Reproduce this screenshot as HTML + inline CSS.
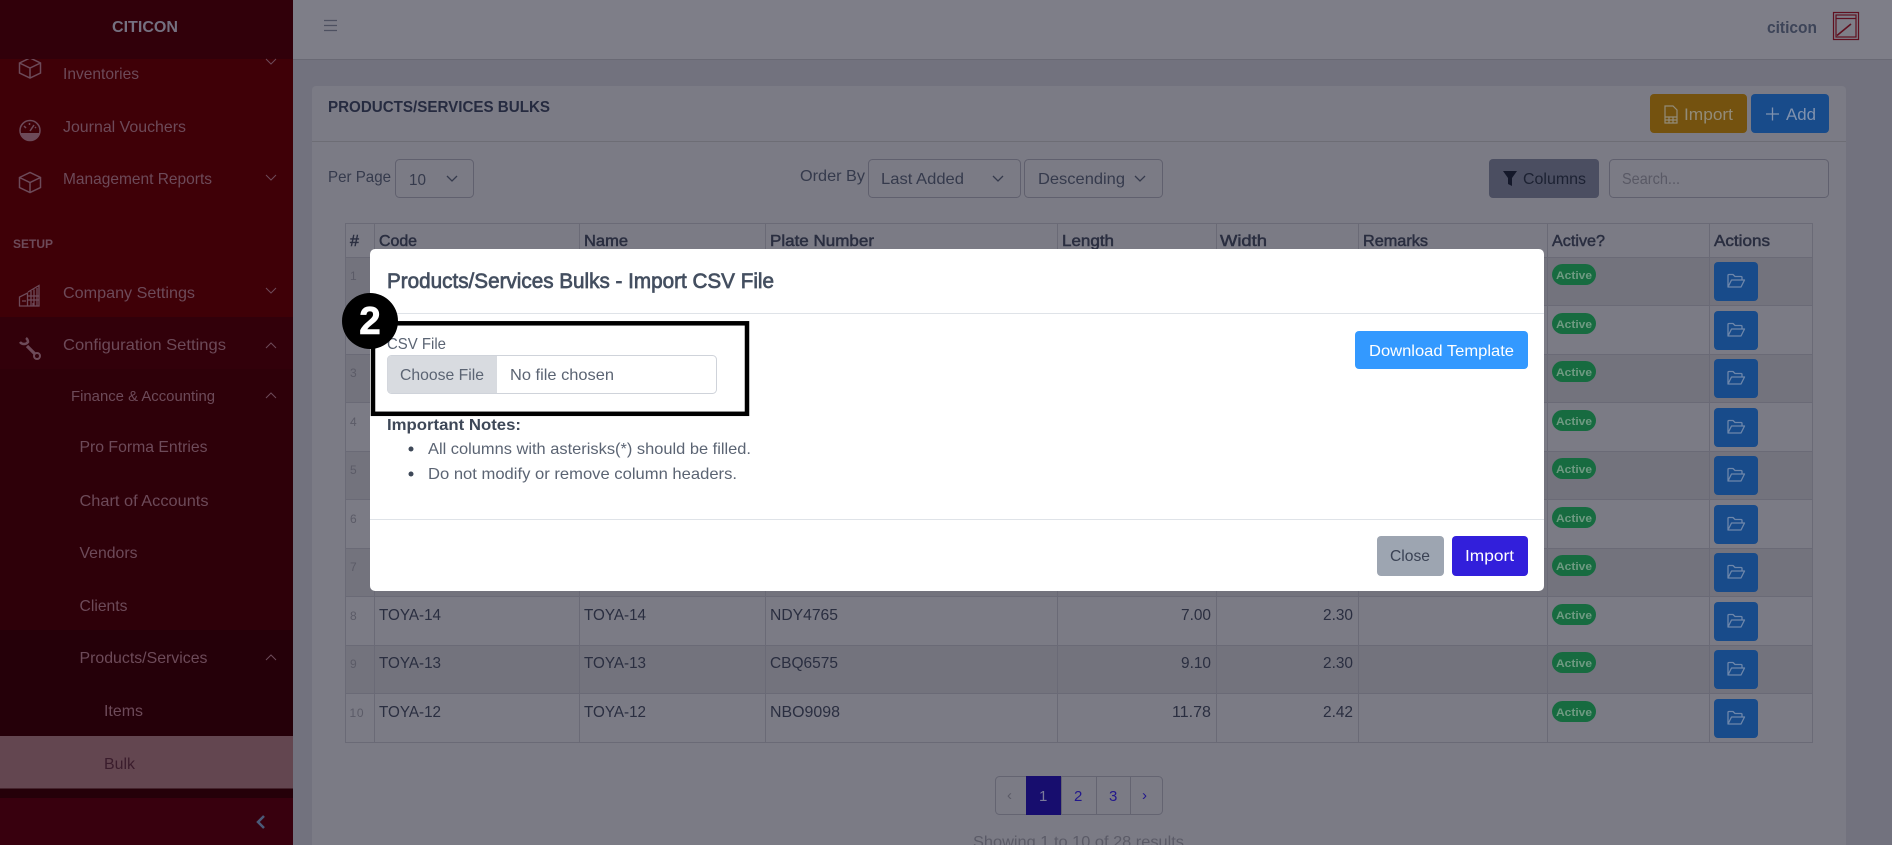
<!DOCTYPE html>
<html lang="en"><head><meta charset="utf-8"><title>Products/Services Bulks</title>
<style>
html,body{margin:0;padding:0;width:1892px;height:845px;overflow:hidden;background:#72727e}
svg{display:block;font-family:"Liberation Sans",sans-serif}
.s{font-size:16px;fill:#6d4a59}
.th{font-size:16px;fill:#2a2e40;stroke:#2a2e40;stroke-width:.5}
.td{font-size:16px;fill:#2a2e40}
.n{font-size:12px;fill:#5b5b67}
.ic{fill:none;stroke:#6d4a59;stroke-width:1.5}
.ch{fill:none;stroke:#6d4a59;stroke-width:1}
.bd{font-size:11px;font-weight:700;fill:#6f9a82}
.ln{stroke:#6a6a76;stroke-width:1}
.m{font-size:16px;fill:#5b6473}
</style></head><body>
<svg width="1892" height="845" viewBox="0 0 1892 845" xmlns="http://www.w3.org/2000/svg">
<defs>
<g id="box"><path class="ic" d="M0 5L10.500 0L21 5V15L10.500 20L0 15ZM0 5L10.500 10L21 5M10.500 10V20"/></g>
<g id="act"><rect width="44" height="39" rx="4" fill="#184b8a"/><path d="M14 25V13.500a1 1 0 0 1 1-1h4l2 2h6a1 1 0 0 1 1 1V18M14 25h13l3.500-7H17.500z" fill="none" stroke="#6d86aa" stroke-width="1.300" stroke-linejoin="round"/></g>
<rect id="bg" width="44" height="21" rx="10.500" fill="#176b40"/>
</defs>

<!-- page -->
<rect width="1892" height="845" fill="#72727e"/>
<rect x="293" y="0" width="1599" height="59" fill="#7e7e88"/>
<line x1="293" y1="59.500" x2="1892" y2="59.500" stroke="#696974"/>
<path d="M324 20.500h13M324 25.500h13M324 30.500h13" stroke="#4d5060" stroke-width="1.200" fill="none"/>
<text x="1767" y="33" font-size="17" font-weight="700" fill="#3d4458" textLength="50" lengthAdjust="spacingAndGlyphs">citicon</text>
<g fill="none" stroke="#601020" stroke-width="1.200"><rect x="1833.500" y="12.500" width="25" height="27"/><rect x="1836" y="15" width="20" height="22"/><path d="M1836 18.500h20"/><path d="M1837 35.500L1851 24" stroke-width="1.600"/></g>

<!-- card -->
<rect x="312" y="86" width="1534" height="770" rx="4" fill="#7b7b85"/>
<line x1="312" y1="141.500" x2="1846" y2="141.500" stroke="#6d6d75"/>
<text x="328" y="112" font-size="16" font-weight="700" fill="#262b40" textLength="222" lengthAdjust="spacingAndGlyphs">PRODUCTS/SERVICES BULKS</text>

<rect x="1650" y="94" width="97" height="39" rx="4" fill="#74520f"/>
<path d="M1665 106h8l4 4v13h-12zM1665 117h12M1665 120h12M1669 117v6M1673 117v6" fill="none" stroke="#928b78" stroke-width="1.200"/>
<text x="1684" y="120" font-size="17" fill="#928b78" textLength="49" lengthAdjust="spacingAndGlyphs">Import</text>
<rect x="1751" y="94" width="78" height="39" rx="4" fill="#184b8a"/>
<path d="M1766 114h13M1772.500 107.500v13" stroke="#8092ae" stroke-width="1.300" fill="none"/>
<text x="1786" y="120" font-size="17" fill="#8092ae" textLength="30" lengthAdjust="spacingAndGlyphs">Add</text>

<text x="328" y="182" font-size="16" fill="#353a4c" textLength="63" lengthAdjust="spacingAndGlyphs">Per Page</text>
<rect x="395.500" y="159.500" width="78" height="38" rx="4" fill="none" stroke="#60606e"/>
<text x="409" y="185" font-size="16" fill="#353a4c" textLength="17" lengthAdjust="spacingAndGlyphs">10</text>
<path d="M447 176l5 5 5-5" fill="none" stroke="#353a4c" stroke-width="1.300"/>

<text x="800" y="181" font-size="16" fill="#353a4c" textLength="65" lengthAdjust="spacingAndGlyphs">Order By</text>
<rect x="868.500" y="159.500" width="152" height="38" rx="4" fill="none" stroke="#60606e"/>
<text x="881" y="184" font-size="16" fill="#353a4c" textLength="83" lengthAdjust="spacingAndGlyphs">Last Added</text>
<path d="M993 176l5 5 5-5" fill="none" stroke="#353a4c" stroke-width="1.300"/>
<rect x="1024.500" y="159.500" width="138" height="38" rx="4" fill="none" stroke="#60606e"/>
<text x="1038" y="184" font-size="16" fill="#353a4c" textLength="87" lengthAdjust="spacingAndGlyphs">Descending</text>
<path d="M1135 176l5 5 5-5" fill="none" stroke="#353a4c" stroke-width="1.300"/>

<rect x="1489" y="159" width="110" height="39" rx="4" fill="#4b4e61"/>
<path d="M1503 171h14l-5 7v8l-4-2v-6z" fill="#14182a"/>
<text x="1523" y="184" font-size="16" fill="#1c2132" textLength="63" lengthAdjust="spacingAndGlyphs">Columns</text>
<rect x="1609.500" y="159.500" width="219" height="38" rx="4" fill="none" stroke="#60606e"/>
<text x="1622" y="184" font-size="16" fill="#595965" textLength="58" lengthAdjust="spacingAndGlyphs">Search...</text>

<!-- table -->
<rect x="345" y="257" width="1467" height="48.500" fill="#73737d"/>
<rect x="345" y="354" width="1467" height="48.500" fill="#73737d"/>
<rect x="345" y="451" width="1467" height="48.500" fill="#73737d"/>
<rect x="345" y="548" width="1467" height="48.500" fill="#73737d"/>
<rect x="345" y="645" width="1467" height="48.500" fill="#73737d"/>
<g class="ln">
<path d="M345 223.500H1812M345 257.500H1812M345 305.500H1812M345 354.500H1812M345 402.500H1812M345 451.500H1812M345 499.500H1812M345 548.500H1812M345 596.500H1812M345 645.500H1812M345 693.500H1812M345 742.500H1812"/>
<path d="M345.500 223V743M374.500 223V743M579.500 223V743M765.500 223V743M1057.500 223V743M1216.500 223V743M1358.500 223V743M1547.500 223V743M1709.500 223V743M1812.500 223V743"/>
</g>
<text class="th" x="350" y="246" textLength="10">#</text>
<text class="th" x="379" y="246" textLength="38" lengthAdjust="spacingAndGlyphs">Code</text>
<text class="th" x="584" y="246" textLength="44" lengthAdjust="spacingAndGlyphs">Name</text>
<text class="th" x="770" y="246" textLength="104" lengthAdjust="spacingAndGlyphs">Plate Number</text>
<text class="th" x="1062" y="246" textLength="52" lengthAdjust="spacingAndGlyphs">Length</text>
<text class="th" x="1220" y="246" textLength="47" lengthAdjust="spacingAndGlyphs">Width</text>
<text class="th" x="1363" y="246" textLength="65" lengthAdjust="spacingAndGlyphs">Remarks</text>
<text class="th" x="1552" y="246" textLength="53" lengthAdjust="spacingAndGlyphs">Active?</text>
<text class="th" x="1714" y="246" textLength="56" lengthAdjust="spacingAndGlyphs">Actions</text>

<text class="n" x="350" y="280">1</text><text class="n" x="350" y="329">2</text><text class="n" x="350" y="377">3</text><text class="n" x="350" y="426">4</text><text class="n" x="350" y="474">5</text><text class="n" x="350" y="523">6</text><text class="n" x="350" y="571">7</text><text class="n" x="350" y="620">8</text><text class="n" x="350" y="668">9</text><text class="n" x="349.500" y="717" textLength="14">10</text>

<text class="td" x="379" y="620" textLength="62" lengthAdjust="spacingAndGlyphs">TOYA-14</text><text class="td" x="584" y="620" textLength="62" lengthAdjust="spacingAndGlyphs">TOYA-14</text><text class="td" x="770" y="620" textLength="68" lengthAdjust="spacingAndGlyphs">NDY4765</text><text class="td" x="1181" y="620" textLength="30" lengthAdjust="spacingAndGlyphs">7.00</text><text class="td" x="1323" y="620" textLength="30" lengthAdjust="spacingAndGlyphs">2.30</text>
<text class="td" x="379" y="668" textLength="62" lengthAdjust="spacingAndGlyphs">TOYA-13</text><text class="td" x="584" y="668" textLength="62" lengthAdjust="spacingAndGlyphs">TOYA-13</text><text class="td" x="770" y="668" textLength="68" lengthAdjust="spacingAndGlyphs">CBQ6575</text><text class="td" x="1181" y="668" textLength="30" lengthAdjust="spacingAndGlyphs">9.10</text><text class="td" x="1323" y="668" textLength="30" lengthAdjust="spacingAndGlyphs">2.30</text>
<text class="td" x="379" y="717" textLength="62" lengthAdjust="spacingAndGlyphs">TOYA-12</text><text class="td" x="584" y="717" textLength="62" lengthAdjust="spacingAndGlyphs">TOYA-12</text><text class="td" x="770" y="717" textLength="70" lengthAdjust="spacingAndGlyphs">NBO9098</text><text class="td" x="1172" y="717" textLength="39" lengthAdjust="spacingAndGlyphs">11.78</text><text class="td" x="1323" y="717" textLength="30" lengthAdjust="spacingAndGlyphs">2.42</text>

<use href="#bg" x="1552" y="264"/><use href="#bg" x="1552" y="313"/><use href="#bg" x="1552" y="361"/><use href="#bg" x="1552" y="410"/><use href="#bg" x="1552" y="458"/><use href="#bg" x="1552" y="507"/><use href="#bg" x="1552" y="555"/><use href="#bg" x="1552" y="604"/><use href="#bg" x="1552" y="652"/><use href="#bg" x="1552" y="701"/>
<text class="bd" x="1556" y="279" textLength="36" lengthAdjust="spacingAndGlyphs">Active</text><text class="bd" x="1556" y="328" textLength="36" lengthAdjust="spacingAndGlyphs">Active</text><text class="bd" x="1556" y="376" textLength="36" lengthAdjust="spacingAndGlyphs">Active</text><text class="bd" x="1556" y="425" textLength="36" lengthAdjust="spacingAndGlyphs">Active</text><text class="bd" x="1556" y="473" textLength="36" lengthAdjust="spacingAndGlyphs">Active</text><text class="bd" x="1556" y="522" textLength="36" lengthAdjust="spacingAndGlyphs">Active</text><text class="bd" x="1556" y="570" textLength="36" lengthAdjust="spacingAndGlyphs">Active</text><text class="bd" x="1556" y="619" textLength="36" lengthAdjust="spacingAndGlyphs">Active</text><text class="bd" x="1556" y="667" textLength="36" lengthAdjust="spacingAndGlyphs">Active</text><text class="bd" x="1556" y="716" textLength="36" lengthAdjust="spacingAndGlyphs">Active</text>
<use href="#act" x="1714" y="262"/><use href="#act" x="1714" y="311"/><use href="#act" x="1714" y="359"/><use href="#act" x="1714" y="408"/><use href="#act" x="1714" y="456"/><use href="#act" x="1714" y="505"/><use href="#act" x="1714" y="553"/><use href="#act" x="1714" y="602"/><use href="#act" x="1714" y="650"/><use href="#act" x="1714" y="699"/>

<!-- pagination -->
<rect x="995.500" y="776.500" width="167" height="38" rx="4" fill="none" stroke="#646471"/>
<path d="M1061.500 776V815M1096.500 776V815M1130.500 776V815" stroke="#646471"/>
<rect x="1026" y="776" width="35" height="39" fill="#170d6e"/>
<text x="1007" y="800" font-size="15" fill="#5b5b67">‹</text>
<text x="1039" y="801" font-size="15" fill="#7a7a9a">1</text>
<text x="1074" y="801" font-size="15" fill="#22178c">2</text>
<text x="1109" y="801" font-size="15" fill="#22178c">3</text>
<text x="1142" y="800" font-size="15" fill="#22178c">›</text>
<text x="973" y="847" font-size="16" fill="#5b5b67" textLength="211" lengthAdjust="spacingAndGlyphs">Showing 1 to 10 of 28 results</text>

<!-- sidebar -->
<rect width="293" height="845" fill="#3f0007"/>
<rect y="317" width="293" height="52" fill="#32000a"/>
<rect y="369" width="293" height="261" fill="#2e0009"/>
<rect y="630" width="293" height="168" fill="#250009"/>
<rect y="736" width="293" height="52.500" fill="#634650"/>
<rect y="798" width="293" height="47" fill="#38000e"/>

<use href="#box" x="19.500" y="58"/>
<rect y="0" width="293" height="59" fill="#31000a"/>
<text x="112" y="32" font-size="16" font-weight="700" fill="#757080" textLength="66" lengthAdjust="spacingAndGlyphs">CITICON</text>

<text class="s" x="63" y="79" textLength="76" lengthAdjust="spacingAndGlyphs">Inventories</text>
<text class="s" x="63" y="132" textLength="123" lengthAdjust="spacingAndGlyphs">Journal Vouchers</text>
<text class="s" x="63" y="184" textLength="149" lengthAdjust="spacingAndGlyphs">Management Reports</text>
<text x="13" y="248" font-size="12" font-weight="700" fill="#6d4a59" textLength="40" lengthAdjust="spacingAndGlyphs">SETUP</text>
<text class="s" x="63" y="298" textLength="132" lengthAdjust="spacingAndGlyphs">Company Settings</text>
<text class="s" x="63" y="350" textLength="163" lengthAdjust="spacingAndGlyphs">Configuration Settings</text>
<text class="s" x="71" y="401" style="font-size:15px" textLength="144" lengthAdjust="spacingAndGlyphs">Finance &amp; Accounting</text>
<text class="s" x="79.500" y="452" textLength="128" lengthAdjust="spacingAndGlyphs">Pro Forma Entries</text>
<text class="s" x="79.500" y="506" textLength="129" lengthAdjust="spacingAndGlyphs">Chart of Accounts</text>
<text class="s" x="79.500" y="558" textLength="58" lengthAdjust="spacingAndGlyphs">Vendors</text>
<text class="s" x="79.500" y="611" textLength="48" lengthAdjust="spacingAndGlyphs">Clients</text>
<text class="s" x="79.500" y="663" textLength="128" lengthAdjust="spacingAndGlyphs">Products/Services</text>
<text class="s" x="104" y="716" textLength="39" lengthAdjust="spacingAndGlyphs">Items</text>
<text x="104" y="769" font-size="16" fill="#3a1c2c" textLength="31" lengthAdjust="spacingAndGlyphs">Bulk</text>

<circle class="ic" cx="30" cy="130.500" r="10"/><path d="M20.500 133a9.800 9.800 0 0 0 19 0z" fill="#6d4a59"/><path class="ic" d="M30 131l4-6M24 126l2 2M29.500 123v2M36 127l-1 1"/>
<use href="#box" x="19.500" y="172.500"/>
<g fill="none" stroke="#6d4a59" stroke-width="1.300"><path d="M19.500 306v-9l8-4v13zM28 292l11-6.500V306H19.500"/><path d="M31 291v15M34 289.500v16.500M37 288v18M28 296h11M28 300h11M22 301h4M33 306v-3"/></g>
<path d="M20 342a5 5 0 0 0 8 0 5 5 0 0 0-2-4" fill="none" stroke="#6d4a59" stroke-width="2.500"/><path d="M27 346l8 8" fill="none" stroke="#6d4a59" stroke-width="3.200"/><circle cx="37" cy="356" r="3" fill="#32000a" stroke="#6d4a59" stroke-width="2"/>

<path class="ch" d="M266 59l5 5 5-5M266 175l5 5 5-5M266 288l5 5 5-5M266 348l5-5 5 5M266 398l5-5 5 5M266 660l5-5 5 5"/>
<path d="M264 816l-6 6 6 6" fill="none" stroke="#4a5a78" stroke-width="2.500"/>

<!-- modal -->
<rect x="370" y="249" width="1174" height="342" rx="5" fill="#ffffff"/>
<line x1="370" y1="313.500" x2="1544" y2="313.500" stroke="#dfe3e8"/>
<line x1="370" y1="519.500" x2="1544" y2="519.500" stroke="#dfe3e8"/>
<text x="387" y="288" font-size="21" fill="#444f60" stroke="#444f60" stroke-width=".7" textLength="387" lengthAdjust="spacingAndGlyphs">Products/Services Bulks - Import CSV File</text>

<text class="m" x="387" y="349" textLength="59" lengthAdjust="spacingAndGlyphs">CSV File</text>
<rect x="387.500" y="355.500" width="329" height="38" rx="4" fill="#fff" stroke="#cfd3da"/>
<path d="M497 356H391.500a4 4 0 0 0-4 4V389a4 4 0 0 0 4 4H497z" fill="#d8dbe0"/>
<text class="m" x="400" y="380" textLength="84" lengthAdjust="spacingAndGlyphs">Choose File</text>
<text class="m" x="510" y="380" textLength="104" lengthAdjust="spacingAndGlyphs">No file chosen</text>

<text x="387" y="430" font-size="16" font-weight="700" fill="#3e4858" textLength="134" lengthAdjust="spacingAndGlyphs">Important Notes:</text>
<circle cx="411" cy="449" r="2.500" fill="#3e4858"/><circle cx="411" cy="474" r="2.500" fill="#3e4858"/>
<text class="m" x="428" y="454" textLength="323" lengthAdjust="spacingAndGlyphs">All columns with asterisks(*) should be filled.</text>
<text class="m" x="428" y="479" textLength="309" lengthAdjust="spacingAndGlyphs">Do not modify or remove column headers.</text>

<rect x="1355" y="331" width="173" height="38" rx="4" fill="#3399ff"/>
<text x="1369" y="356" font-size="16" fill="#ffffff" textLength="145" lengthAdjust="spacingAndGlyphs">Download Template</text>
<rect x="1377" y="536" width="67" height="40" rx="4" fill="#9da5b1"/>
<text x="1390" y="561" font-size="16" fill="#3a4254" textLength="40" lengthAdjust="spacingAndGlyphs">Close</text>
<rect x="1452" y="536" width="76" height="40" rx="4" fill="#321fdb"/>
<text x="1465" y="561" font-size="16" fill="#ffffff" textLength="49" lengthAdjust="spacingAndGlyphs">Import</text>

<!-- annotation -->
<rect x="373" y="323.300" width="374" height="90.500" fill="none" stroke="#000" stroke-width="4.500"/>
<circle cx="370" cy="321" r="28" fill="#000"/>
<text x="370" y="334" font-size="39" font-weight="700" fill="#fff" stroke="#fff" stroke-width=".6" text-anchor="middle">2</text>
</svg>
</body></html>
